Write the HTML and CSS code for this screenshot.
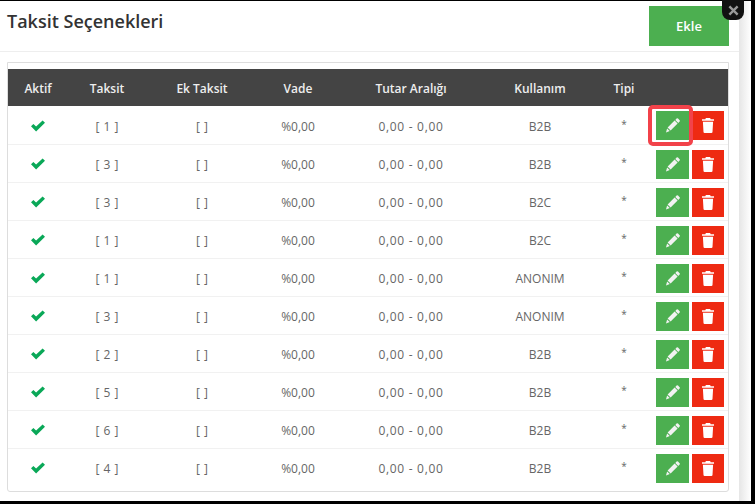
FILE: index.html
```html
<!DOCTYPE html>
<html lang="tr">
<head>
<meta charset="utf-8">
<title>Taksit Seçenekleri</title>
<link rel="stylesheet" href="styles.css">
</head>
<body>
<svg class="sprite" width="0" height="0" aria-hidden="true">
  <symbol id="check" viewBox="0 0 16 12"><path d="M1 6.2 L3.4 3.9 L6.1 6.6 L12.6 .4 L15 2.7 L6.1 11.4 Z"/></symbol>
  <symbol id="pencil" viewBox="0 0 14 15"><path d="M10.6.6 a1 1 0 0 1 1.4 0 L13.6 2.2 a1 1 0 0 1 0 1.4 L12.3 4.9 L9.3 1.9 Z M8.6 2.6 L11.6 5.6 L4.6 12.6 L1.6 9.6 Z M1.1 10.4 L3.8 13.1 L0 14.4 Z"/></symbol>
  <symbol id="trash" viewBox="0 0 12 15"><path d="M3.9 0 H8.1 L8.7 1.3 H12 V2.8 H0 V1.3 H3.3 Z M.9 3.7 H11.1 L10.5 14 Q10.4 15 9.4 15 H2.6 Q1.6 15 1.5 14 Z"/></symbol>
</svg>
<div class="page">
  <main class="modal">
    <header class="head">
      <h1>Taksit Seçenekleri</h1>
      <button class="add">Ekle</button>
    </header>
    <section class="panel">
      <table>
        <thead>
          <tr><th class="c1">Aktif</th><th class="c2">Taksit</th><th class="c3">Ek Taksit</th><th class="c4">Vade</th><th class="c5">Tutar Aralığı</th><th class="c6">Kullanım</th><th class="c7">Tipi</th><th class="c8"></th></tr>
        </thead>
        <tbody>
          <tr><td><svg class="ok"><use href="#check"/></svg></td><td>[ 1 ]</td><td>[ ]</td><td>%0,00</td><td>0,00 - 0,00</td><td>B2B</td><td>*</td><td><div class="acts"><span class="focus"><button class="edit"><svg class="pen"><use href="#pencil"/></svg></button></span><button class="del"><svg class="bin"><use href="#trash"/></svg></button></div></td></tr>
          <tr><td><svg class="ok"><use href="#check"/></svg></td><td>[ 3 ]</td><td>[ ]</td><td>%0,00</td><td>0,00 - 0,00</td><td>B2B</td><td>*</td><td><div class="acts"><button class="edit"><svg class="pen"><use href="#pencil"/></svg></button><button class="del"><svg class="bin"><use href="#trash"/></svg></button></div></td></tr>
          <tr><td><svg class="ok"><use href="#check"/></svg></td><td>[ 3 ]</td><td>[ ]</td><td>%0,00</td><td>0,00 - 0,00</td><td>B2C</td><td>*</td><td><div class="acts"><button class="edit"><svg class="pen"><use href="#pencil"/></svg></button><button class="del"><svg class="bin"><use href="#trash"/></svg></button></div></td></tr>
          <tr><td><svg class="ok"><use href="#check"/></svg></td><td>[ 1 ]</td><td>[ ]</td><td>%0,00</td><td>0,00 - 0,00</td><td>B2C</td><td>*</td><td><div class="acts"><button class="edit"><svg class="pen"><use href="#pencil"/></svg></button><button class="del"><svg class="bin"><use href="#trash"/></svg></button></div></td></tr>
          <tr><td><svg class="ok"><use href="#check"/></svg></td><td>[ 1 ]</td><td>[ ]</td><td>%0,00</td><td>0,00 - 0,00</td><td>ANONIM</td><td>*</td><td><div class="acts"><button class="edit"><svg class="pen"><use href="#pencil"/></svg></button><button class="del"><svg class="bin"><use href="#trash"/></svg></button></div></td></tr>
          <tr><td><svg class="ok"><use href="#check"/></svg></td><td>[ 3 ]</td><td>[ ]</td><td>%0,00</td><td>0,00 - 0,00</td><td>ANONIM</td><td>*</td><td><div class="acts"><button class="edit"><svg class="pen"><use href="#pencil"/></svg></button><button class="del"><svg class="bin"><use href="#trash"/></svg></button></div></td></tr>
          <tr><td><svg class="ok"><use href="#check"/></svg></td><td>[ 2 ]</td><td>[ ]</td><td>%0,00</td><td>0,00 - 0,00</td><td>B2B</td><td>*</td><td><div class="acts"><button class="edit"><svg class="pen"><use href="#pencil"/></svg></button><button class="del"><svg class="bin"><use href="#trash"/></svg></button></div></td></tr>
          <tr><td><svg class="ok"><use href="#check"/></svg></td><td>[ 5 ]</td><td>[ ]</td><td>%0,00</td><td>0,00 - 0,00</td><td>B2B</td><td>*</td><td><div class="acts"><button class="edit"><svg class="pen"><use href="#pencil"/></svg></button><button class="del"><svg class="bin"><use href="#trash"/></svg></button></div></td></tr>
          <tr><td><svg class="ok"><use href="#check"/></svg></td><td>[ 6 ]</td><td>[ ]</td><td>%0,00</td><td>0,00 - 0,00</td><td>B2B</td><td>*</td><td><div class="acts"><button class="edit"><svg class="pen"><use href="#pencil"/></svg></button><button class="del"><svg class="bin"><use href="#trash"/></svg></button></div></td></tr>
          <tr><td><svg class="ok"><use href="#check"/></svg></td><td>[ 4 ]</td><td>[ ]</td><td>%0,00</td><td>0,00 - 0,00</td><td>B2B</td><td>*</td><td><div class="acts"><button class="edit"><svg class="pen"><use href="#pencil"/></svg></button><button class="del"><svg class="bin"><use href="#trash"/></svg></button></div></td></tr>
        </tbody>
      </table>
    </section>
    <button class="close" aria-label="Kapat"><svg viewBox="0 0 12 12"><path d="M1.5 1.5 L10.5 10.5 M10.5 1.5 L1.5 10.5"/></svg></button>
  </main>
  <div class="rail"></div>
</div>
</body>
</html>
```
FILE: styles.css
```css
* { box-sizing: border-box; }
html, body { margin: 0; height: 504px; overflow: hidden; background: #000; }
.sprite { position: absolute; }
.page { display: flex; height: 504px; padding: 1px 4px 3px 0; font-family: "Open Sans", "Noto Sans", sans-serif; }
.modal { position: relative; width: 739px; background: #fff; padding: 0 10px 0 7px; }
.rail { flex: 1; background: linear-gradient(90deg, #e6e6e6, #fff); }
.head { height: 51px; margin: 0 -10px 0 -7px; padding: 5px 10px 0 7px; border-bottom: 1px solid #eee; display: flex; justify-content: space-between; align-items: flex-start; }
h1 { margin: 5px 0 0; font-size: 18px; line-height: 20px; font-weight: 600; color: #333; }
.add { width: 80px; height: 40px; border: 0; background: #4caf50; color: #fff; font: 600 13px "Open Sans", sans-serif; }
.panel { margin-top: 10px; height: 430px; border: 1px solid #ddd; border-radius: 0 0 3px 3px; padding-top: 6px; }
table { width: 100%; border-collapse: collapse; table-layout: fixed; font-size: 12px; color: #666; word-spacing: 1px; }
thead tr { height: 37px; background: #444; }
th { color: #eee; font-weight: 600; font-size: 12px; text-align: center; padding: 2px 0 0; word-spacing: 0; }
td { height: 38px; padding: 3px 0 0; text-align: center; border-bottom: 1px solid #f1f1f1; }
tbody tr:last-child td { border-bottom: 0; }
tbody td:nth-child(5) { word-spacing: 0; letter-spacing: .7px; }
tbody td:nth-child(7) { font-size: 10px; padding-top: 0; padding-bottom: 2px; }
tbody td:last-child { vertical-align: top; padding-top: 5px; }
.c1 { width: 60px; } .c2 { width: 78px; } .c3 { width: 112px; } .c4 { width: 80px; } .c5 { width: 146px; } .c6 { width: 112px; } .c7 { width: 56px; } .c8 { width: 76px; }
.ok { width: 16px; height: 12px; fill: #0aa858; display: block; margin: 0 auto 1px; }
.acts { display: flex; justify-content: flex-end; gap: 3px; padding-right: 4px; height: 29px; }
.edit, .del { border: 0; padding: 0; height: 29px; display: flex; align-items: center; justify-content: center; }
.edit { width: 33px; background: #4caf50; }
.del { width: 32px; background: #ee2a12; }
.pen { width: 14px; height: 15px; fill: #f2f2f2; }
.bin { width: 12px; height: 15px; fill: #fff; }
.focus { display: block; position: relative; }
.focus::after { content: ""; position: absolute; inset: -6px -4px -6px -8px; border: 4px solid #f2424a; border-radius: 5px; }
.close { position: absolute; top: -1px; right: -5px; width: 22px; height: 20px; padding: 0; border: 0; background: #111; border-radius: 0 0 8px 8px; display: flex; align-items: center; justify-content: center; }
.close svg { width: 11px; height: 11px; fill: none; stroke: #999; stroke-width: 2.6; }
```
